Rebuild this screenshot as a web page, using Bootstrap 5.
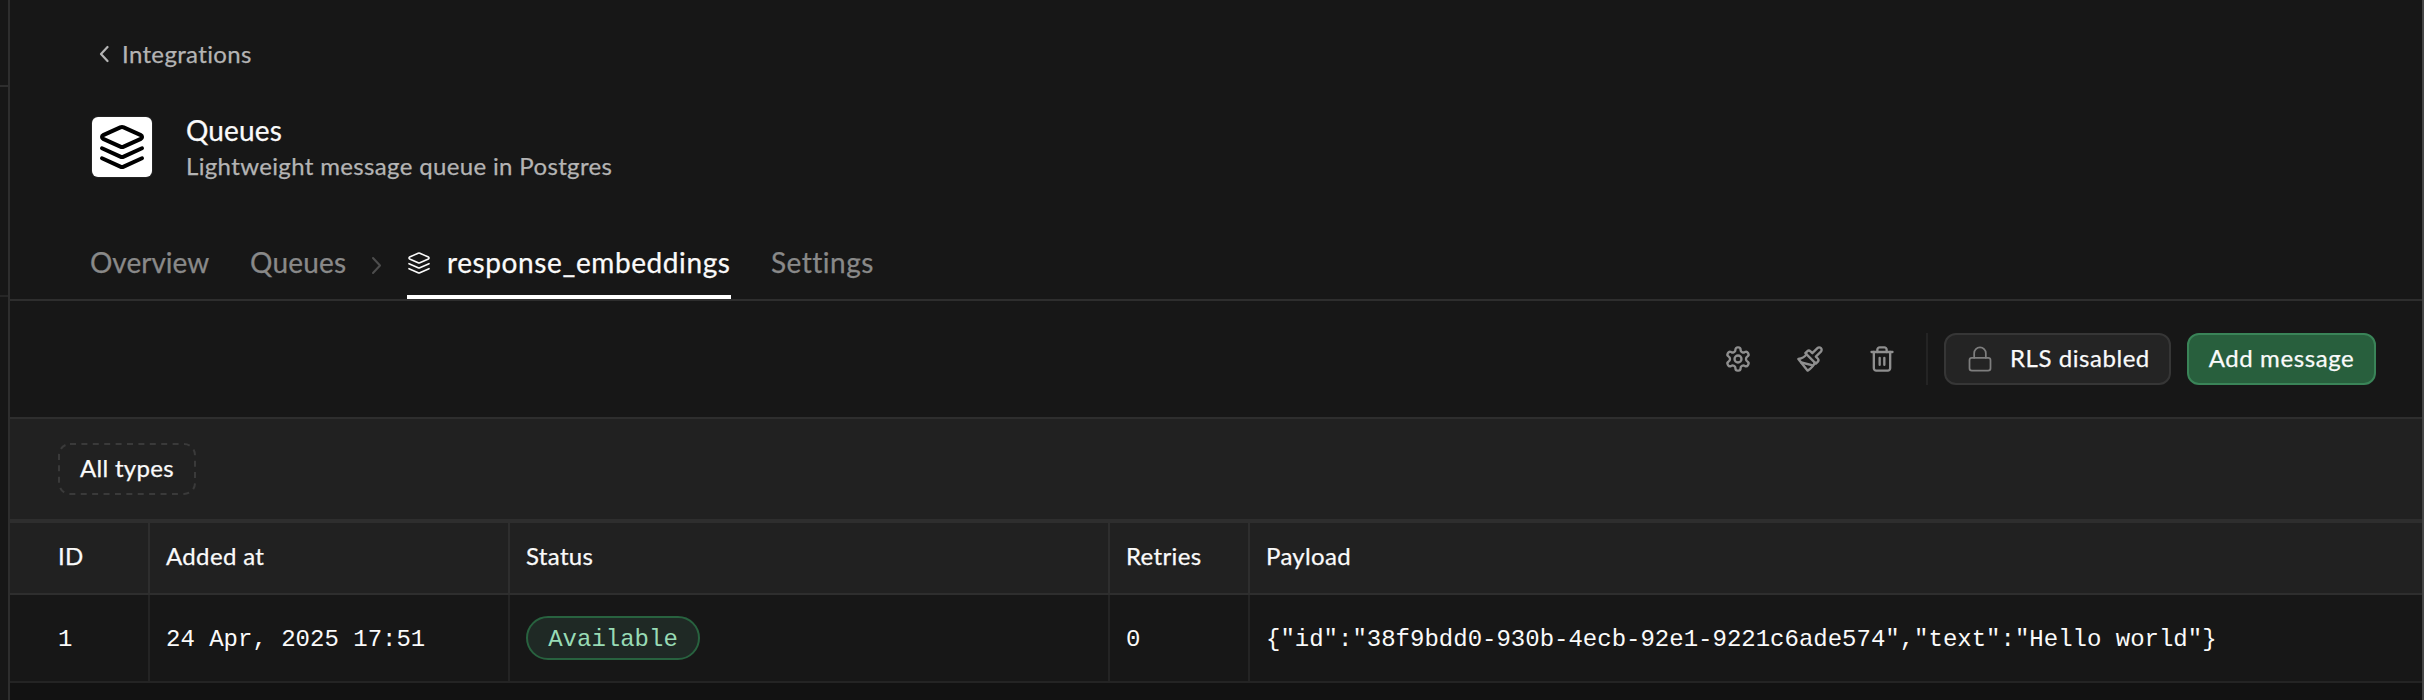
<!DOCTYPE html>
<html lang="en">
<head>
<meta charset="utf-8">
<title>Queues</title>
<meta name="viewport" content="width=device-width, initial-scale=1">
<link href="https://cdn.jsdelivr.net/npm/bootstrap@5.3.0/dist/css/bootstrap.min.css" rel="stylesheet">
<style>
  :root { --line: #2e2e2e; --surface: #212121; --muted: #898989; }
  body { background: #171717; color: #fafafa; font-family: Lato, "Liberation Sans", sans-serif; font-size: 24px; line-height: 30px; overflow: hidden; -webkit-text-stroke: .25px currentColor; }
  svg { display: block; flex: none; fill: none; stroke: currentColor; stroke-linecap: round; stroke-linejoin: round; }
  .rail { width: 8px; padding-top: 85px; }
  .rail-line { height: 2px; background: var(--line); }
  .rail-line.dim { margin-top: 208px; background: #262626; }
  .page { border-left: 2px solid var(--line); border-right: 2px solid #454545; background: #121212; }
  .page-head { height: 301px; padding: 39px 80px 0; border-bottom: 2px solid var(--line); background: #171717; }
  .back-link { color: #b4b4b4; letter-spacing: .35px; padding-left: 9px; gap: 13px; }
  .page-title { margin-top: 43px; gap: 34px; padding-left: 2px; }
  .logo { width: 60px; height: 60px; margin-top: 5px; border-radius: 6px; background: #fff; color: #000; box-shadow: 0 0 0 1px #232323; }
  .title-text { font-size: 28px; line-height: 34px; letter-spacing: .15px; margin-top: 1px; margin-bottom: 4px; }
  .subtitle { color: #b4b4b4; letter-spacing: .35px; }
  .tabs { margin-top: 63px; height: 55px; font-size: 28px; line-height: 36px; color: var(--muted); }
  .tab-current { color: #fafafa; border-bottom: 4px solid #fff; letter-spacing: .6px; gap: 16px; width: 324px; height: 55px; white-space: nowrap; }
  .toolbar { height: 118px; padding-right: 46px; border-bottom: 2px solid var(--line); background: #171717; }
  .tool-icons { gap: 44px; color: #8f8f8f; margin-right: 30px; }
  .divider { width: 2px; height: 52px; background: #242424; margin-right: 16px; }
  .action { --bs-btn-font-size: 24px; --bs-btn-padding-y: 0; --bs-btn-padding-x: 0; --bs-btn-border-width: 2px; --bs-btn-border-radius: 12px; --bs-btn-color: #fafafa; --bs-btn-line-height: 30px; height: 52px; letter-spacing: .6px; white-space: nowrap; }
  .action span { position: relative; top: -1px; }
  .action-rls { --bs-btn-bg: #242424; --bs-btn-border-color: #363636; width: 227px; padding-left: 20px; gap: 16px; margin-right: 16px; letter-spacing: .55px; }
  .action-rls svg { color: #7e7e7e; }
  .action-add { --bs-btn-bg: #285f3d; --bs-btn-border-color: #3a8458; width: 189px; }
  .filters { height: 104px; padding-left: 48px; background: var(--surface); border-bottom: 4px solid var(--line); }
  .action-types { border: 0; width: 138px; letter-spacing: .3px; position: relative; }
  .action-types svg { position: absolute; inset: 0; stroke: #3a3a3a; stroke-linecap: butt; }
  .messages { table-layout: fixed; width: 100%; border-collapse: separate; border-spacing: 0; }
  .messages th, .messages td { border: 0 solid #242424; border-width: 0 2px 2px 0; padding: 0 0 0 16px; vertical-align: middle; white-space: nowrap; }
  .messages th { height: 72px; background: var(--surface); border-color: var(--line); font-weight: 400; padding-bottom: 4px; letter-spacing: .35px; }
  .messages td { height: 88px; background: #171717; font-family: "Liberation Mono", monospace; padding-top: 3px; -webkit-text-stroke: 0; }
  .messages th:first-child, .messages td:first-child { padding-left: 48px; }
  .messages th:last-child, .messages td:last-child { border-right: 0; }
  .messages td.status-cell { padding-top: 0; }
  .status-pill { width: 174px; height: 44px; border: 2px solid #28623f; background: #1f2925; color: #98dbb5; border-radius: 22px; padding-top: 3px; }
</style>
</head>
<body>
<div class="d-flex vh-100">
  <div class="rail flex-shrink-0">
    <div class="rail-line"></div>
    <div class="rail-line dim"></div>
  </div>
  <main class="page flex-grow-1">
    <header class="page-head">
      <a class="back-link d-flex align-items-center text-decoration-none" href="#">
        <svg width="10" height="18" viewBox="0 0 10 18" stroke-width="2.2"><path d="M8.5 2 2 9l6.500 7"/></svg>
        <span>Integrations</span>
      </a>
      <div class="page-title d-flex align-items-start">
        <div class="logo d-flex align-items-center justify-content-center">
          <svg width="48" height="48" viewBox="0 0 24 24" stroke-width="2"><path d="M12.830 2.180a2 2 0 0 0-1.660 0L2.600 6.080a1 1 0 0 0 0 1.830l8.580 3.910a2 2 0 0 0 1.660 0l8.580-3.900a1 1 0 0 0 0-1.830Z"/><path d="m22 12.650-9.170 4.160a2 2 0 0 1-1.660 0L2 12.650"/><path d="m22 17.650-9.170 4.160a2 2 0 0 1-1.660 0L2 17.650"/></svg>
        </div>
        <div>
          <div class="title-text">Queues</div>
          <div class="subtitle">Lightweight message queue in Postgres</div>
        </div>
      </div>
      <nav class="tabs d-flex align-items-start">
        <span style="width:160px">Overview</span>
        <span style="width:121px;letter-spacing:.2px">Queues</span>
        <svg class="mt-1" style="color:#4d4d4d;margin-right:25px" width="11" height="34" viewBox="0 0 11 34" stroke-width="2"><path d="m2 10 7 7.500L2 25"/></svg>
        <span class="tab-current d-flex">
          <svg style="margin-top:7px" width="24" height="24" viewBox="0 0 24 24" stroke-width="1.600"><path d="M12.830 2.180a2 2 0 0 0-1.660 0L2.600 6.080a1 1 0 0 0 0 1.830l8.580 3.910a2 2 0 0 0 1.660 0l8.580-3.900a1 1 0 0 0 0-1.830Z"/><path d="m22 12.650-9.170 4.160a2 2 0 0 1-1.660 0L2 12.650"/><path d="m22 17.650-9.170 4.160a2 2 0 0 1-1.660 0L2 17.650"/></svg>
          <span>response_embeddings</span>
        </span>
        <span style="margin-left:40px;letter-spacing:.5px">Settings</span>
      </nav>
    </header>

    <section class="toolbar d-flex align-items-center justify-content-end">
      <div class="tool-icons d-flex">
        <svg width="28" height="28" viewBox="0 0 24 24" stroke-width="2"><path d="M12.220 2h-.440a2 2 0 0 0-2 2v.180a2 2 0 0 1-1 1.730l-.430.250a2 2 0 0 1-2 0l-.150-.080a2 2 0 0 0-2.730.730l-.220.380a2 2 0 0 0 .730 2.730l.150.100a2 2 0 0 1 1 1.720v.510a2 2 0 0 1-1 1.740l-.150.090a2 2 0 0 0-.730 2.730l.220.380a2 2 0 0 0 2.730.730l.150-.080a2 2 0 0 1 2 0l.430.250a2 2 0 0 1 1 1.730V20a2 2 0 0 0 2 2h.440a2 2 0 0 0 2-2v-.180a2 2 0 0 1 1-1.730l.430-.250a2 2 0 0 1 2 0l.150.080a2 2 0 0 0 2.730-.730l.220-.390a2 2 0 0 0-.730-2.730l-.150-.080a2 2 0 0 1-1-1.740v-.500a2 2 0 0 1 1-1.740l.150-.090a2 2 0 0 0 .730-2.730l-.220-.380a2 2 0 0 0-2.730-.730l-.150.080a2 2 0 0 1-2 0l-.430-.250a2 2 0 0 1-1-1.730V4a2 2 0 0 0-2-2z"/><circle cx="12" cy="12" r="3"/></svg>
        <svg width="28" height="28" viewBox="0 0 24 24" stroke-width="2"><path d="M18.370 2.630 14 7l-1.590-1.590a2 2 0 0 0-2.820 0L8 7l9 9 1.590-1.590a2 2 0 0 0 0-2.820L17 10l4.370-4.370a2.120 2.120 0 1 0-3-3Z"/><path d="M9 8c-2 3-4 3.500-7 4l8 10c2-1 6-5 6-7"/><path d="M14.500 17.500 4.500 15"/></svg>
        <svg width="28" height="28" viewBox="0 0 24 24" stroke-width="2"><path d="M3 6h18"/><path d="M19 6v14c0 1-1 2-2 2H7c-1 0-2-1-2-2V6"/><path d="M8 6V4c0-1 1-2 2-2h4c1 0 2 1 2 2v2"/><path d="M10 11v6M14 11v6"/></svg>
      </div>
      <div class="divider"></div>
      <button class="btn action action-rls d-flex align-items-center" type="button">
        <svg width="28" height="28" viewBox="0 0 24 24" stroke-width="1.500"><rect x="3" y="11" width="18" height="11" rx="2"/><path d="M7 11V7a5 5 0 0 1 10 0v4"/></svg>
        <span>RLS disabled</span>
      </button>
      <button class="btn action action-add" type="button"><span>Add message</span></button>
    </section>

    <section class="filters d-flex align-items-center">
      <button class="btn action action-types" type="button">
        <svg width="138" height="52" stroke-width="2" stroke-dasharray="6 5.400"><rect x="1" y="1" width="136" height="50" rx="11"/></svg>
        <span>All types</span>
      </button>
    </section>

    <table class="messages">
      <colgroup><col style="width:140px"><col style="width:360px"><col style="width:600px"><col style="width:140px"><col></colgroup>
      <thead>
        <tr><th>ID</th><th>Added at</th><th>Status</th><th>Retries</th><th>Payload</th></tr>
      </thead>
      <tbody>
        <tr>
          <td>1</td>
          <td>24 Apr, 2025 17:51</td>
          <td class="status-cell"><div class="status-pill d-flex align-items-center justify-content-center">Available</div></td>
          <td>0</td>
          <td>{"id":"38f9bdd0-930b-4ecb-92e1-9221c6ade574","text":"Hello world"}</td>
        </tr>
      </tbody>
    </table>
  </main>
</div>
<script src="https://cdn.jsdelivr.net/npm/bootstrap@5.3.0/dist/js/bootstrap.bundle.min.js"></script>
</body>
</html>
